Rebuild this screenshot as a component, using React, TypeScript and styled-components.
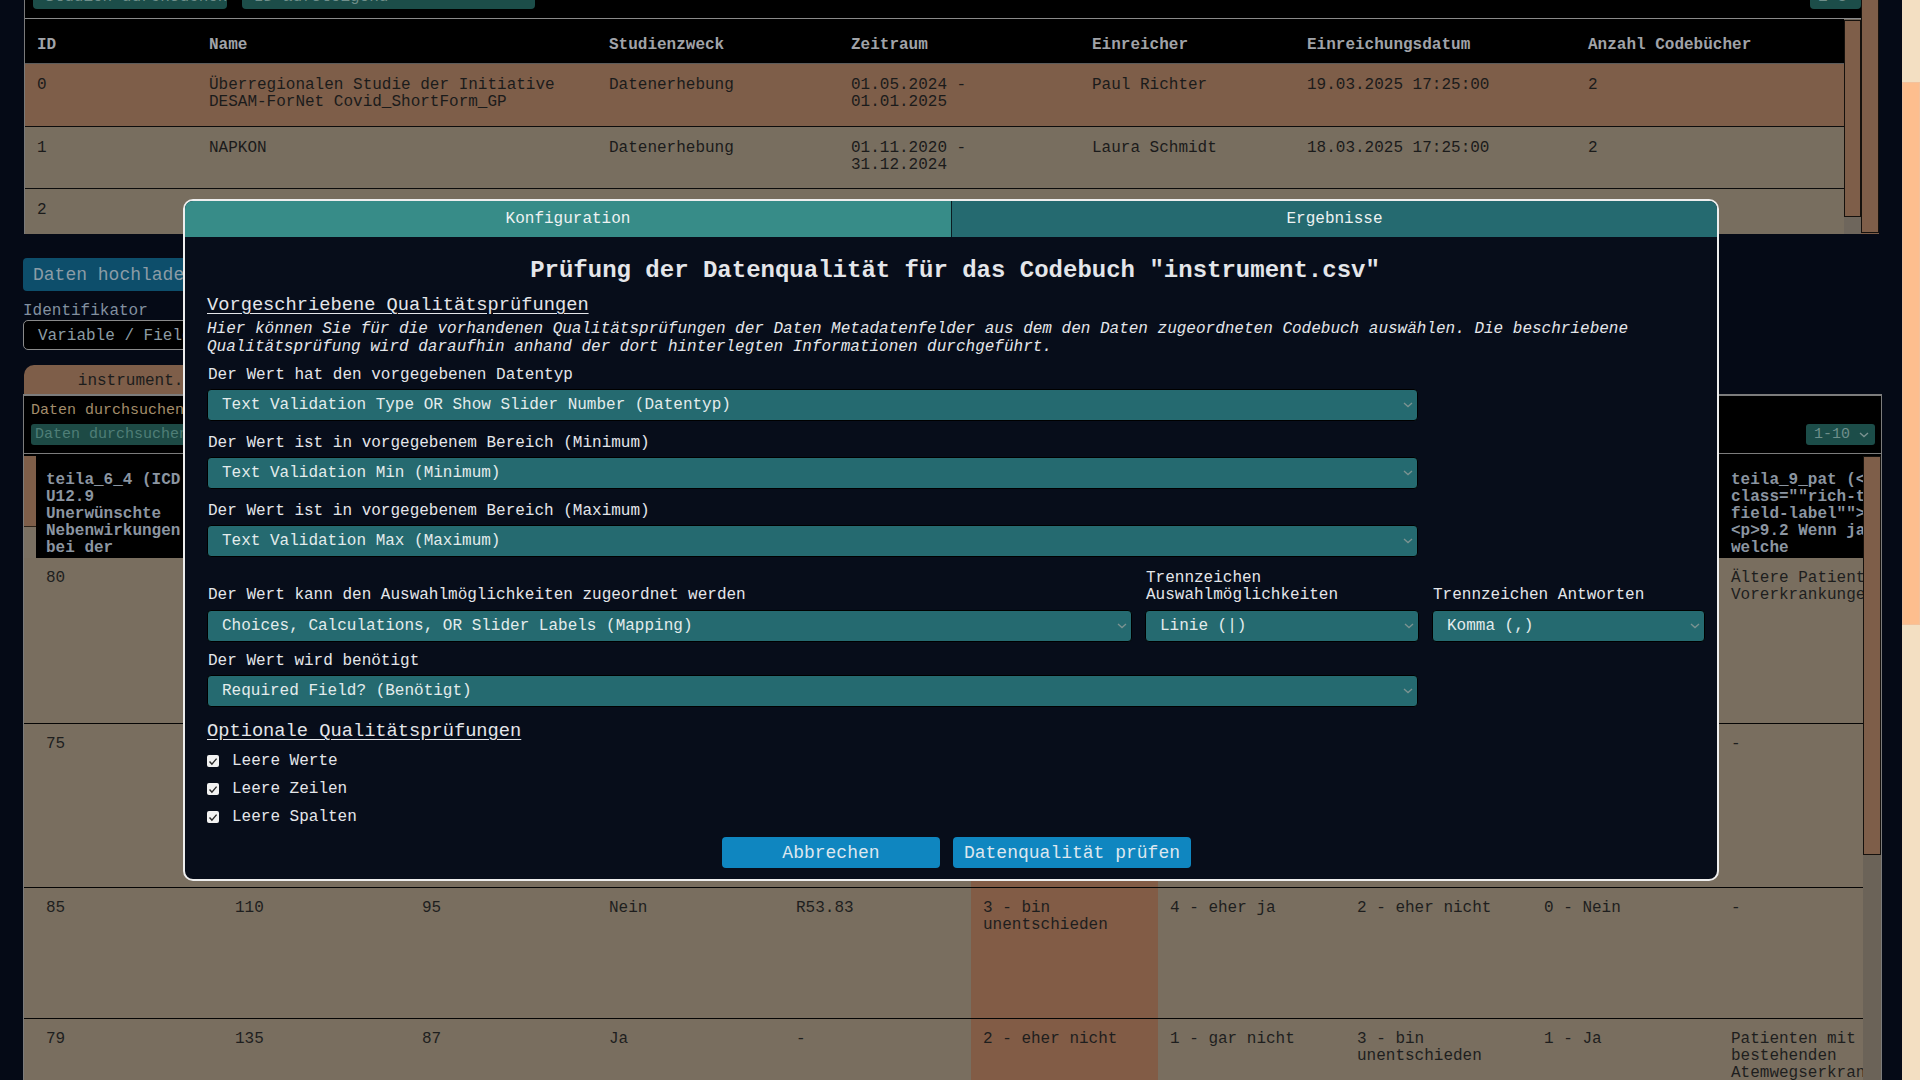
import React from 'react';
import styled, { createGlobalStyle } from 'styled-components';

const mono = `"Liberation Mono", "DejaVu Sans Mono", monospace`;

const GlobalStyle = createGlobalStyle`
  html, body {
    margin: 0;
    padding: 0;
    background: #050a16;
    overflow: hidden;
  }
  body {
    font-family: ${mono};
    font-size: 16px;
  }
  * {
    box-sizing: border-box;
  }
`;

const Screen = styled.div`
  position: relative;
  display: flex;
  width: 1920px;
  height: 1080px;
  overflow: hidden;
`;

const Page = styled.div`
  flex: 1;
  min-width: 0;
  padding: 0 20px 0 23px;
  overflow: hidden;
`;

/* ---------- scrollbars ---------- */

const Track = styled.div<{ $w: number; $track: string }>`
  flex: 0 0 ${({ $w }) => $w}px;
  width: ${({ $w }) => $w}px;
  display: flex;
  flex-direction: column;
  background: ${({ $track }) => $track};
`;

const Thumb = styled.div<{ $top: number; $h: number; $color: string; $edge: string }>`
  margin-top: ${({ $top }) => $top}px;
  height: ${({ $h }) => $h}px;
  background: ${({ $color }) => $color};
  border: 1px solid ${({ $edge }) => $edge};
`;

const ScrollBar: React.FC<{
  width: number;
  top: number;
  height: number;
  track: string;
  thumb: string;
  edge?: string;
}> = ({ width, top, height, track, thumb, edge = '#15110d' }) => (
  <Track $w={width} $track={track}>
    <Thumb $top={top} $h={height} $color={thumb} $edge={edge} />
  </Track>
);

/* ---------- study table (top) ---------- */

const StudyCard = styled.section`
  display: flex;
  height: 264px;
  margin: -30px 3px 0 1px;
  background: #000;
  border-left: 1px solid #7a7a7a;
  overflow: hidden;
`;

const StudyMain = styled.div`
  flex: 1;
  min-width: 0;
  display: flex;
  flex-direction: column;
`;

const Toolbar = styled.div`
  display: flex;
  align-items: center;
  gap: 15px;
  height: 31px;
  margin-top: 8px;
  padding-left: 8px;
`;

const DarkInput = styled.div<{ $w: number }>`
  display: flex;
  justify-content: space-between;
  width: ${({ $w }) => $w}px;
  height: 31px;
  padding: 10px 10px 0 12px;
  background: #1c4d49;
  border-radius: 4px;
  color: #6f8f8b;
  font-size: 16px;
  line-height: 18px;
  white-space: nowrap;
`;

const CountBadge = styled.div`
  margin-left: auto;
  width: 51px;
  height: 31px;
  padding: 10px 8px 0;
  background: #1c4d49;
  border-radius: 4px;
  color: #6f8f8b;
  line-height: 18px;
`;

const StudyFrame = styled.div`
  flex: 1;
  display: flex;
  margin-top: 9px;
  border-top: 1px solid #8a8a8a;
  min-height: 0;
`;

const StudyTable = styled.div`
  flex: 1;
  min-width: 0;
`;

const studyCols = '172px 400px 242px 241px 215px 281px 1fr';

const StudyHead = styled.div`
  display: grid;
  grid-template-columns: ${studyCols};
  align-items: center;
  height: 45px;
  padding-top: 7px;
  border-bottom: 1px solid #5c5c5c;
  color: #a0a3a8;
  font-weight: 700;
`;

const StudyRow = styled.div<{ $bg: string; $h: number }>`
  display: grid;
  grid-template-columns: ${studyCols};
  align-items: start;
  height: ${({ $h }) => $h}px;
  padding-top: 13px;
  background: ${({ $bg }) => $bg};
  border-bottom: 1px solid #0c0c0c;
  color: #1b1b1b;
  line-height: 17px;
`;

const Cell = styled.div`
  padding: 0 12px;
  min-width: 0;
`;

/* ---------- upload / identifier ---------- */

const UploadButton = styled.div`
  width: 200px;
  height: 33px;
  margin-top: 24px;
  padding: 7px 10px 0;
  background: #0d4e6b;
  border-radius: 4px;
  color: #8b9ca6;
  font-size: 18px;
  line-height: 20px;
`;

const SideLabel = styled.div`
  margin-top: 11px;
  color: #8290a0;
  line-height: 18px;
`;

const OutlineSelect = styled.div`
  width: 260px;
  height: 30px;
  padding: 6px 14px 0;
  border: 1px solid #8a8a8a;
  border-radius: 5px;
  background: #000;
  color: #8c9ca4;
  white-space: nowrap;
  overflow: hidden;
`;

const FileTab = styled.div`
  width: 242px;
  height: 29px;
  margin: 15px 0 0 1px;
  background: #7e5e49;
  border-radius: 10px 10px 0 0;
  color: #1c1c1c;
  text-align: center;
  line-height: 33px;
  overflow: hidden;
`;

/* ---------- data panel ---------- */

const DataPanel = styled.section`
  border: 1px solid #7c7c7c;
  border-top-width: 2px;
  border-bottom: none;
  background: #000;
`;

const DataHead = styled.div`
  display: flex;
  align-items: flex-end;
  justify-content: space-between;
  height: 58px;
  padding: 0 6px 8px 7px;
  border-bottom: 1px solid #7c7c7c;
`;

const SearchGroup = styled.div`
  display: flex;
  flex-direction: column;
  gap: 5px;
`;

const SearchLabel = styled.div`
  color: #a38d6b;
  font-size: 15px;
  line-height: 17px;
`;

const SearchField = styled.div`
  width: 260px;
  height: 21px;
  padding: 2px 4px 0;
  background: #1d4a45;
  border-radius: 3px;
  color: #4f7e77;
  font-size: 15px;
`;

const PageSize = styled.div`
  display: flex;
  align-items: center;
  justify-content: space-between;
  width: 69px;
  height: 21px;
  padding: 0 6px 0 8px;
  background: #1c4d49;
  border-radius: 3px;
  color: #6f8f8b;
  font-size: 15px;
`;

const DataFrame = styled.div`
  display: flex;
  height: 640px;
  margin-top: 2px;
`;

const DataTable = styled.div`
  flex: 1;
  min-width: 0;
  overflow: hidden;
`;

const dataCols = '12px repeat(9, 187px) 220px';

const DataHeadRow = styled.div`
  display: grid;
  grid-template-columns: ${dataCols};
  align-items: start;
  height: 102px;
  background: #000;
  overflow: hidden;
`;

const HeadCell = styled.div`
  max-height: 101px;
  padding: 16px 12px 0;
  color: #8b95a1;
  font-weight: 700;
  line-height: 17px;
  white-space: pre-line;
  overflow: hidden;

  &:nth-child(2) {
    padding-left: 10px;
  }
`;

const Gutter = styled.div`
  display: flex;
  flex-direction: column;
  height: 102px;
  background: #7a7062;
`;

const GutterThumb = styled.div`
  height: 71px;
  background: #7e5e49;
  border-bottom: 1px solid #2a2118;
`;

const DataRow = styled.div<{ $h: number }>`
  display: grid;
  grid-template-columns: ${dataCols};
  height: ${({ $h }) => $h}px;
  background: #796e5f;
  border-bottom: 1px solid #050505;
  color: #1e1e1e;
  line-height: 17px;
  overflow: hidden;
`;

const DataCell = styled.div<{ $hl?: boolean }>`
  padding: 12px 12px 0;
  background: ${({ $hl }) => ($hl ? '#825c46' : 'transparent')};
  min-width: 0;

  &:nth-child(2) {
    padding-left: 10px;
  }
`;

/* ---------- modal ---------- */

const Modal = styled.div`
  position: absolute;
  left: 183px;
  top: 199px;
  width: 1536px;
  height: 682px;
  display: flex;
  flex-direction: column;
  background: #070d1a;
  border: 2px solid #eeeeee;
  border-radius: 10px;
  overflow: hidden;
  color: #e4e6ea;
`;

const Tabs = styled.div`
  display: grid;
  grid-template-columns: 1fr 1fr;
  height: 36px;
  flex: 0 0 36px;
`;

const Tab = styled.div<{ $active?: boolean }>`
  display: flex;
  align-items: center;
  justify-content: center;
  background: ${({ $active }) => ($active ? '#378c88' : '#256a70')};
  border-left: ${({ $active }) => ($active ? 'none' : '1px solid #0b1c22')};
  color: #eef2f2;
`;

const Body = styled.div`
  display: flex;
  flex-direction: column;
  padding: 0 22px 11px;
`;

const Title = styled.h2`
  margin: 20px 0 0;
  padding-left: 8px;
  font-size: 24px;
  line-height: 28px;
  text-align: center;
`;

const Section = styled.h3<{ $gap: number }>`
  margin: ${({ $gap }) => $gap}px 0 0;
  font-size: 18.72px;
  font-weight: 400;
  line-height: 22px;
  text-decoration: underline;
  text-underline-offset: 3px;
`;

const Hint = styled.p`
  margin: 4px 0 0;
  font-style: italic;
  line-height: 18px;
`;

const Label = styled.div<{ $gap: number }>`
  margin-top: ${({ $gap }) => $gap}px;
  padding-left: 1px;
  line-height: 17px;
`;

const SelectBox = styled.div<{ $w?: number }>`
  display: flex;
  align-items: center;
  justify-content: space-between;
  width: ${({ $w }) => ($w ? `${$w}px` : '100%')};
  height: 32px;
  margin-top: 5px;
  padding: 0 4px 0 14px;
  background: #256a70;
  border: 1px solid #000;
  border-radius: 4px;
  color: #e3ecec;
  white-space: nowrap;
`;

const SplitRow = styled.div`
  display: grid;
  grid-template-columns: 925px 274px 273px;
  column-gap: 13px;
  align-items: end;
  margin-top: 13px;
`;

const SplitField = styled.div`
  display: flex;
  flex-direction: column;
  ${SelectBox} {
    margin-top: 6px;
  }
  ${Label} {
    margin-top: 0;
  }
`;

const Checks = styled.div`
  display: flex;
  flex-direction: column;
  gap: 6px;
  margin-top: 8px;
`;

const CheckRow = styled.label`
  display: flex;
  align-items: center;
  gap: 13px;
  height: 22px;
`;

const Box = styled.span`
  display: flex;
  align-items: center;
  justify-content: center;
  width: 12px;
  height: 12px;
  background: #f2f2f2;
  border-radius: 2px;
`;

const Actions = styled.div`
  display: flex;
  justify-content: center;
  gap: 13px;
  margin-top: 9px;
  padding-left: 11px;
`;

const Button = styled.button`
  min-width: 218px;
  height: 31px;
  padding: 0 11px;
  background: #0f86c0;
  border: none;
  border-radius: 4px;
  color: #dde7ef;
  font-family: ${mono};
  font-size: 18px;
`;

const Chevron = () => (
  <svg width="10" height="6" viewBox="0 0 10 6">
    <path d="M1 1l4 3.6L9 1" fill="none" stroke="#7c9391" strokeWidth="1.3" />
  </svg>
);

const Check = () => (
  <svg width="10" height="9" viewBox="0 0 10 9">
    <path d="M1.5 4.6l2.4 2.5L8.6 1.6" fill="none" stroke="#2b2b2b" strokeWidth="1.4" />
  </svg>
);

const Select: React.FC<{ value: string; width?: number }> = ({ value, width }) => (
  <SelectBox $w={width}>
    <span>{value}</span>
    <Chevron />
  </SelectBox>
);

/* ---------- data ---------- */

const studies = [
  {
    id: '0',
    name: 'Überregionalen Studie der Initiative DESAM-ForNet Covid_ShortForm_GP',
    purpose: 'Datenerhebung',
    period: '01.05.2024 - 01.01.2025',
    submitter: 'Paul Richter',
    date: '19.03.2025 17:25:00',
    books: '2',
    bg: '#7e5e49',
    h: 63,
  },
  {
    id: '1',
    name: 'NAPKON',
    purpose: 'Datenerhebung',
    period: '01.11.2020 - 31.12.2024',
    submitter: 'Laura Schmidt',
    date: '18.03.2025 17:25:00',
    books: '2',
    bg: '#786e5f',
    h: 62,
  },
  {
    id: '2',
    name: 'Pilotstudie Long-COVID Ambulanz',
    purpose: 'Datenerhebung',
    period: '01.01.2023 - 31.12.2025',
    submitter: 'Jonas Weber',
    date: '17.03.2025 17:25:00',
    books: '1',
    bg: '#786e5f',
    h: 62,
  },
];

const dataHeaders = [
  'teila_6_4 (ICD U12.9 Unerwünschte Nebenwirkungen bei der Verabreichung von Impfstoffen)',
  'teila_7_1 (Größe in cm)',
  'teila_7_2 (Gewicht in kg)',
  'teila_8_1 (Raucher)',
  'teila_8_2 (ICD Diagnose)',
  'teila_9_1 (Belastung im Alltag)',
  'teila_9_2 (Zufriedenheit mit der Versorgung)',
  'teila_9_3 (Einschränkung im Beruf)',
  'teila_9_4 (Vorerkrankung)',
  'teila_9_pat (<p\nclass=""rich-text-\nfield-label"">\n<p>9.2 Wenn ja\nwelche',
];

const dataRows = [
  {
    h: 166,
    cells: ['80', '172', '78', 'Nein', '-', '2 - eher nicht', '3 - bin unentschieden', '4 - eher ja', '1 - Ja', 'Ältere Patienten Vorerkrankungen'],
  },
  {
    h: 164,
    cells: ['75', '168', '64', 'Ja', 'J45.9', '1 - gar nicht', '2 - eher nicht', '3 - bin unentschieden', '0 - Nein', '-'],
  },
  {
    h: 131,
    cells: ['85', '110', '95', 'Nein', 'R53.83', '3 - bin unentschieden', '4 - eher ja', '2 - eher nicht', '0 - Nein', '-'],
  },
  {
    h: 200,
    cells: ['79', '135', '87', 'Ja', '-', '2 - eher nicht', '1 - gar nicht', '3 - bin unentschieden', '1 - Ja', 'Patienten mit bestehenden Atemwegserkrankungen'],
  },
];

const HIGHLIGHT_COL = 5;

const App: React.FC = () => {
  return (
    <>
      <GlobalStyle />
      <Screen>
        <Page>
          <StudyCard>
            <StudyMain>
              <Toolbar>
                <DarkInput $w={194}>Studien durchsuchen</DarkInput>
                <DarkInput $w={293}>
                  <span>ID aufsteigend</span>
                  <Chevron />
                </DarkInput>
                <CountBadge>1-3</CountBadge>
              </Toolbar>
              <StudyFrame>
                <StudyTable>
                  <StudyHead>
                    <Cell>ID</Cell>
                    <Cell>Name</Cell>
                    <Cell>Studienzweck</Cell>
                    <Cell>Zeitraum</Cell>
                    <Cell>Einreicher</Cell>
                    <Cell>Einreichungsdatum</Cell>
                    <Cell>Anzahl Codebücher</Cell>
                  </StudyHead>
                  {studies.map((s) => (
                    <StudyRow key={s.id} $bg={s.bg} $h={s.h}>
                      <Cell>{s.id}</Cell>
                      <Cell>{s.name}</Cell>
                      <Cell>{s.purpose}</Cell>
                      <Cell>{s.period}</Cell>
                      <Cell>{s.submitter}</Cell>
                      <Cell>{s.date}</Cell>
                      <Cell>{s.books}</Cell>
                    </StudyRow>
                  ))}
                </StudyTable>
                <ScrollBar width={17} top={1} height={197} track="#6e665c" thumb="#7e5e49" />
              </StudyFrame>
            </StudyMain>
            <ScrollBar width={18} top={0} height={263} track="#7e5e49" thumb="#7e5e49" />
          </StudyCard>

          <UploadButton>Daten hochladen</UploadButton>
          <SideLabel>Identifikator</SideLabel>
          <OutlineSelect>Variable / Field Name</OutlineSelect>
          <FileTab>instrument.csv</FileTab>

          <DataPanel>
            <DataHead>
              <SearchGroup>
                <SearchLabel>Daten durchsuchen</SearchLabel>
                <SearchField>Daten durchsuchen</SearchField>
              </SearchGroup>
              <PageSize>
                <span>1-10</span>
                <Chevron />
              </PageSize>
            </DataHead>
            <DataFrame>
              <DataTable>
                <DataHeadRow>
                  <Gutter>
                    <GutterThumb />
                  </Gutter>
                  {dataHeaders.map((h, i) => (
                    <HeadCell key={i}>{h}</HeadCell>
                  ))}
                </DataHeadRow>
                {dataRows.map((r, ri) => (
                  <DataRow key={ri} $h={r.h}>
                    <div />
                    {r.cells.map((c, ci) => (
                      <DataCell key={ci} $hl={ci === HIGHLIGHT_COL}>
                        {c}
                      </DataCell>
                    ))}
                  </DataRow>
                ))}
              </DataTable>
              <ScrollBar width={18} top={0} height={399} track="#6b6358" thumb="#7e5e49" />
            </DataFrame>
          </DataPanel>
        </Page>

        <ScrollBar width={18} top={82} height={543} track="#f3dfc2" thumb="#fdbe8e" edge="#f3c29c" />

        <Modal>
          <Tabs>
            <Tab $active>Konfiguration</Tab>
            <Tab>Ergebnisse</Tab>
          </Tabs>
          <Body>
            <Title>Prüfung der Datenqualität für das Codebuch "instrument.csv"</Title>
            <Section $gap={9}>Vorgeschriebene Qualitätsprüfungen</Section>
            <Hint>
              Hier können Sie für die vorhandenen Qualitätsprüfungen der Daten Metadatenfelder aus dem den
              Daten zugeordneten Codebuch auswählen. Die beschriebene Qualitätsprüfung wird daraufhin anhand
              der dort hinterlegten Informationen durchgeführt.
            </Hint>

            <Label $gap={11}>Der Wert hat den vorgegebenen Datentyp</Label>
            <Select value="Text Validation Type OR Show Slider Number (Datentyp)" width={1211} />
            <Label $gap={14}>Der Wert ist in vorgegebenem Bereich (Minimum)</Label>
            <Select value="Text Validation Min (Minimum)" width={1211} />
            <Label $gap={14}>Der Wert ist in vorgegebenem Bereich (Maximum)</Label>
            <Select value="Text Validation Max (Maximum)" width={1211} />

            <SplitRow>
              <SplitField>
                <Label $gap={0}>Der Wert kann den Auswahlmöglichkeiten zugeordnet werden</Label>
                <Select value="Choices, Calculations, OR Slider Labels (Mapping)" />
              </SplitField>
              <SplitField>
                <Label $gap={0}>
                  Trennzeichen
                  <br />
                  Auswahlmöglichkeiten
                </Label>
                <Select value="Linie (|)" />
              </SplitField>
              <SplitField>
                <Label $gap={0}>Trennzeichen Antworten</Label>
                <Select value="Komma (,)" />
              </SplitField>
            </SplitRow>

            <Label $gap={11}>Der Wert wird benötigt</Label>
            <Select value="Required Field? (Benötigt)" width={1211} />

            <Section $gap={13}>Optionale Qualitätsprüfungen</Section>
            <Checks>
              {['Leere Werte', 'Leere Zeilen', 'Leere Spalten'].map((l) => (
                <CheckRow key={l}>
                  <Box>
                    <Check />
                  </Box>
                  {l}
                </CheckRow>
              ))}
            </Checks>

            <Actions>
              <Button>Abbrechen</Button>
              <Button>Datenqualität prüfen</Button>
            </Actions>
          </Body>
        </Modal>
      </Screen>
    </>
  );
};

export default App;
